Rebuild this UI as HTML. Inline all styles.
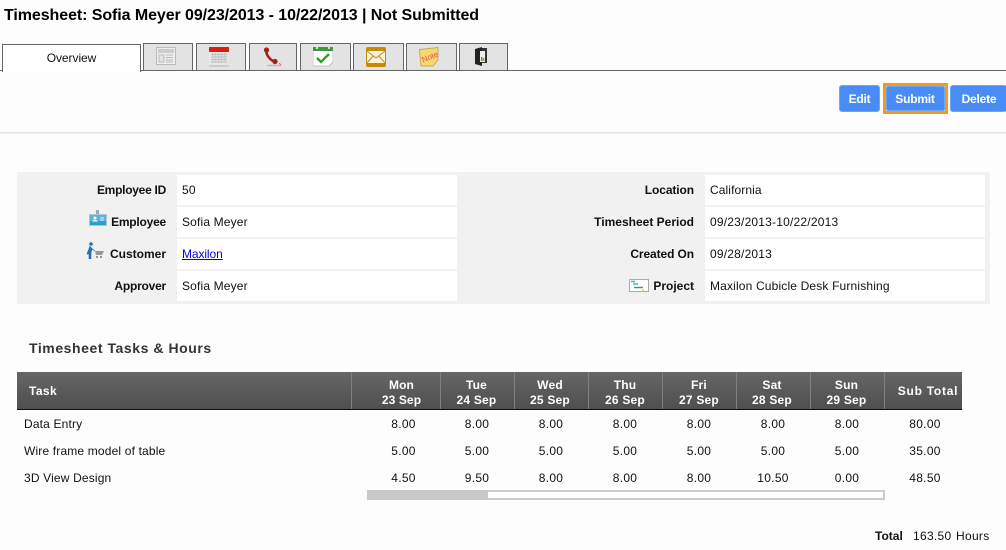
<!DOCTYPE html>
<html><head><meta charset="utf-8">
<style>
html,body{margin:0;padding:0}
body{width:1006px;height:550px;background:#fdfdfd;position:relative;overflow:hidden;font-family:"Liberation Sans",Arial,sans-serif;font-size:12px;color:#111;letter-spacing:.16px}
div,svg,a{position:absolute}
.t{white-space:nowrap;line-height:14px}
.b{font-weight:bold;letter-spacing:-.1px}
.r{text-align:right}
.c{text-align:center;letter-spacing:.3px}
.tab{top:43px;height:26px;background:#e3e3e3;border:1px solid #666;border-bottom:1px solid #666}
.v{background:#fff;height:30px}
.btn{background:#4a8cf5;border:1px solid #6fa4f5;border-radius:3px;color:#fff;font-weight:bold;text-align:center;height:25px;line-height:26px;letter-spacing:-.2px}
.h{color:#fff;font-weight:bold;text-align:center;line-height:15px;letter-spacing:.2px}
.sep{top:372px;width:1px;height:37px;background:#808080}
</style></head><body>
<div class="t" style="left:4px;top:7px;font-size:16px;line-height:18px;font-weight:bold;color:#000;letter-spacing:-.08px">Timesheet: Sofia Meyer 09/23/2013 - 10/22/2013 | Not Submitted</div>

<div style="left:0;top:70px;width:1006px;height:1px;background:#666"></div>
<div style="left:0;top:71px;width:1006px;height:61px;background:#fdfdfd"></div>
<div style="left:0;top:132px;width:1006px;height:2px;background:linear-gradient(#dcdcdc,#f4f4f4)"></div>

<div style="left:2px;top:44px;width:137px;height:27px;background:#fff;border:1px solid #666;border-bottom:0"></div>
<div class="t" style="left:2px;top:51px;width:139px;text-align:center;letter-spacing:-.05px">Overview</div>

<div class="tab" style="left:143px;width:48px"></div>
<div class="tab" style="left:196px;width:48px"></div>
<div class="tab" style="left:249px;width:46px"></div>
<div class="tab" style="left:300px;width:49px"></div>
<div class="tab" style="left:353px;width:49px"></div>
<div class="tab" style="left:406px;width:49px"></div>
<div class="tab" style="left:459px;width:47px"></div>

<svg style="left:156px;top:47px" width="20" height="20" viewBox="0 0 20 20"><rect x=".5" y=".5" width="19" height="17" fill="#eee" stroke="#bbb"/><path d="M2 3h16M2 5h16" stroke="#c0c0c0" stroke-width="1.400"/><rect x="3" y="8" width="5" height="7" fill="#e4e4e4" stroke="#bbb"/><path d="M10 8h7M10 10.500h7M10 13h7M10 15h7" stroke="#bbb"/></svg>
<svg style="left:209px;top:47px" width="20" height="20" viewBox="0 0 20 20"><rect width="20" height="5" fill="#d9200f"/><rect y="5" width="20" height="14" fill="#e6e6e6"/><path d="M2 7.500h16M2 10h16M2 12.500h16M2 15h16" stroke="#bbb"/><path d="M3.500 6v10M6.500 6v10M9.500 6v10M12.500 6v10M15.500 6v10" stroke="#c8c8c8"/><rect y="18" width="20" height="2" fill="#ccc"/></svg>
<svg style="left:263px;top:47px" width="20" height="21" viewBox="0 0 20 21"><path d="M3 3c0 5 4 10 9 12" fill="none" stroke="#a81c1c" stroke-width="2.500"/><circle cx="3.500" cy="3" r="2.600" fill="#a81c1c"/><circle cx="12" cy="14.500" r="2.600" fill="#a81c1c"/><path d="M4 18.500h14" stroke="#bbb" stroke-width="1.500"/><path d="M16 16l2 2" stroke="#d66"/></svg>
<svg style="left:313px;top:47px" width="20" height="20" viewBox="0 0 20 20"><path d="M0 2h20v13l-4 4H0z" fill="#fff" stroke="#999" stroke-width=".6"/><rect width="20" height="4" fill="#3d9b3d"/><rect x="3" width="2" height="2" fill="#ddd"/><rect x="15" width="2" height="2" fill="#ddd"/><path d="M4 11l4 4 8-8" fill="none" stroke="#2f9e1e" stroke-width="2.300"/></svg>
<svg style="left:366px;top:47px" width="20" height="20" viewBox="0 0 20 20"><rect width="20" height="20" rx="2" fill="#c98a06"/><rect x="1" y="4" width="18" height="12" fill="#fff3d8"/><path d="M1 4l9 7 9-7M1 16l6-7M19 16l-6-7" fill="none" stroke="#b98a3c"/></svg>
<svg style="left:419px;top:47px" width="20" height="20" viewBox="0 0 20 20"><path d="M.5 2.500L19 .5V13l-5 6H2z" fill="#f8d86c" stroke="#c4aa60"/><text x="2.500" y="13" transform="rotate(-22 10 10)" font-family="Liberation Sans" font-size="8" fill="#e2505a" letter-spacing="0">Note</text></svg>
<svg style="left:474px;top:47px" width="15" height="21" viewBox="0 0 15 21"><path d="M1 2l7-2v19l-7-2z" fill="#222"/><path d="M8 1h5v15H8z" fill="#333"/><rect x="6" y="4" width="5" height="11" fill="#eee"/><rect x="7" y="10" width="1.500" height="4" fill="#3a3"/><rect x="9" y="11" width="1.500" height="3" fill="#d80"/></svg>

<div class="btn" style="left:839px;top:85px;width:39px">Edit</div>
<div style="left:883px;top:83px;width:59px;height:25px;border:3px solid #f59a12"></div>
<div class="btn" style="left:886px;top:86px;width:57px;height:23px;line-height:25px;border-radius:2px;text-indent:-1px">Submit</div>
<div class="btn" style="left:950px;top:85px;width:56px;border-right:0">Delete</div>

<div style="left:17px;top:172px;width:973px;height:132px;background:#f1f1f1"></div>
<div class="v" style="left:177px;top:175px;width:280px"></div>
<div class="v" style="left:177px;top:207px;width:280px"></div>
<div class="v" style="left:177px;top:239px;width:280px"></div>
<div class="v" style="left:177px;top:271px;width:280px"></div>
<div class="v" style="left:705px;top:175px;width:280px"></div>
<div class="v" style="left:705px;top:207px;width:280px"></div>
<div class="v" style="left:705px;top:239px;width:280px"></div>
<div class="v" style="left:705px;top:271px;width:280px"></div>

<div class="t b r" style="left:17px;top:183px;width:149px;letter-spacing:-.27px">Employee ID</div>
<div class="t b r" style="left:17px;top:215px;width:149px;letter-spacing:-.22px">Employee</div>
<div class="t b r" style="left:17px;top:247px;width:149px;letter-spacing:0">Customer</div>
<div class="t b r" style="left:17px;top:279px;width:149px;letter-spacing:-.22px">Approver</div>
<div class="t" style="left:182px;top:183px">50</div>
<div class="t" style="left:182px;top:215px">Sofia Meyer</div>
<a class="t" style="left:182px;top:247px;color:#0000ee;text-decoration:underline;letter-spacing:-.1px">Maxilon</a>
<div class="t" style="left:182px;top:279px">Sofia Meyer</div>

<div class="t b r" style="left:460px;top:183px;width:234px">Location</div>
<div class="t b r" style="left:460px;top:215px;width:234px;letter-spacing:0">Timesheet Period</div>
<div class="t b r" style="left:460px;top:247px;width:234px">Created On</div>
<div class="t b r" style="left:460px;top:279px;width:234px;letter-spacing:0">Project</div>
<div class="t" style="left:710px;top:183px;letter-spacing:.1px">California</div>
<div class="t" style="left:710px;top:215px;letter-spacing:.2px">09/23/2013-10/22/2013</div>
<div class="t" style="left:710px;top:247px;letter-spacing:.2px">09/28/2013</div>
<div class="t" style="left:710px;top:279px">Maxilon Cubicle Desk Furnishing</div>

<svg style="left:89px;top:210px" width="18" height="17" viewBox="0 0 18 17"><rect x="7" y="0" width="3" height="4" fill="#9ab"/><rect x=".5" y="4.500" width="17" height="11" fill="#5ab4e0" stroke="#b0c4d0"/><rect x="1" y="11" width="16" height="4" fill="#2b9fd0"/><circle cx="6" cy="8" r="1.500" fill="#fff"/><path d="M3 11.500c1-2 5-2 6 0z" fill="#fff"/><path d="M11 8h4M11 10h4" stroke="#cfeefa"/></svg>
<svg style="left:86px;top:242px" width="19" height="17" viewBox="0 0 19 17"><circle cx="5" cy="2" r="1.800" fill="#2a6fb0"/><path d="M4 4L1 12h2v5h2v-6l1-4 3 2" fill="#2a6fb0" stroke="#2a6fb0" stroke-width=".6"/><path d="M9 9h9l-2 4h-6z" fill="#999"/><circle cx="11" cy="15" r="1" fill="#777"/><circle cx="15" cy="15" r="1" fill="#777"/></svg>
<svg style="left:629px;top:279px" width="20" height="13" viewBox="0 0 20 13"><rect x=".5" y=".5" width="19" height="12" fill="#fff" stroke="#aaa"/><path d="M2 2.500h4" stroke="#27b6d8" stroke-width="1.500"/><path d="M4 5h5" stroke="#27b6d8" stroke-width="1.500"/><path d="M5 8.500h9" stroke="#30b030" stroke-width="1.500"/><path d="M13 11h2" stroke="#f0a030"/></svg>

<div class="t" style="left:29px;top:340px;font-size:14px;line-height:16px;font-weight:bold;color:#333;letter-spacing:.56px">Timesheet Tasks &amp; Hours</div>

<div style="left:17px;top:372px;width:945px;height:37px;background:linear-gradient(#666,#4f4f4f)"></div>
<div style="left:17px;top:409px;width:945px;height:1px;background:#111"></div>
<div class="sep" style="left:351px"></div><div class="sep" style="left:440px"></div><div class="sep" style="left:514px"></div><div class="sep" style="left:588px"></div><div class="sep" style="left:662px"></div><div class="sep" style="left:736px"></div><div class="sep" style="left:810px"></div><div class="sep" style="left:884px"></div>

<div class="t h" style="left:29px;top:384px;line-height:15px;text-align:left;letter-spacing:.4px">Task</div>
<div class="t h" style="left:357px;top:378px;width:89px;letter-spacing:.1px">Mon<br>23 Sep</div>
<div class="t h" style="left:440px;top:378px;width:73px">Tue<br>24 Sep</div>
<div class="t h" style="left:514px;top:378px;width:72px">Wed<br>25 Sep</div>
<div class="t h" style="left:588px;top:378px;width:74px">Thu<br>26 Sep</div>
<div class="t h" style="left:662px;top:378px;width:74px">Fri<br>27 Sep</div>
<div class="t h" style="left:736px;top:378px;width:72px">Sat<br>28 Sep</div>
<div class="t h" style="left:810px;top:378px;width:73px">Sun<br>29 Sep</div>
<div class="t h" style="left:884px;top:384px;width:88px;letter-spacing:.75px">Sub Total</div>

<div class="t" style="left:24px;top:417px">Data Entry</div>
<div class="t" style="left:24px;top:444px">Wire frame model of table</div>
<div class="t" style="left:24px;top:471px">3D View Design</div>

<div class="t c" style="left:359px;top:417px;width:89px">8.00</div><div class="t c" style="left:440px;top:417px;width:74px">8.00</div><div class="t c" style="left:514px;top:417px;width:74px">8.00</div><div class="t c" style="left:588px;top:417px;width:74px">8.00</div><div class="t c" style="left:662px;top:417px;width:74px">8.00</div><div class="t c" style="left:736px;top:417px;width:74px">8.00</div><div class="t c" style="left:810px;top:417px;width:74px">8.00</div><div class="t c" style="left:884px;top:417px;width:82px">80.00</div>
<div class="t c" style="left:359px;top:444px;width:89px">5.00</div><div class="t c" style="left:440px;top:444px;width:74px">5.00</div><div class="t c" style="left:514px;top:444px;width:74px">5.00</div><div class="t c" style="left:588px;top:444px;width:74px">5.00</div><div class="t c" style="left:662px;top:444px;width:74px">5.00</div><div class="t c" style="left:736px;top:444px;width:74px">5.00</div><div class="t c" style="left:810px;top:444px;width:74px">5.00</div><div class="t c" style="left:884px;top:444px;width:82px">35.00</div>
<div class="t c" style="left:359px;top:471px;width:89px">4.50</div><div class="t c" style="left:440px;top:471px;width:74px">9.50</div><div class="t c" style="left:514px;top:471px;width:74px">8.00</div><div class="t c" style="left:588px;top:471px;width:74px">8.00</div><div class="t c" style="left:662px;top:471px;width:74px">8.00</div><div class="t c" style="left:736px;top:471px;width:74px">10.50</div><div class="t c" style="left:810px;top:471px;width:74px">0.00</div><div class="t c" style="left:884px;top:471px;width:82px">48.50</div>

<div style="left:367px;top:490px;width:516px;height:6px;background:#fff;border:solid #ccc;border-width:2px 2px 2px 0"></div>
<div style="left:367px;top:490px;width:121px;height:10px;background:#c9c9c9"></div>

<div class="t b" style="left:875px;top:529px;color:#111;letter-spacing:0">Total</div>
<div class="t" style="left:913px;top:529px;letter-spacing:.3px">163.50</div>
<div class="t" style="left:956px;top:529px;letter-spacing:.3px">Hours</div>
</body></html>
